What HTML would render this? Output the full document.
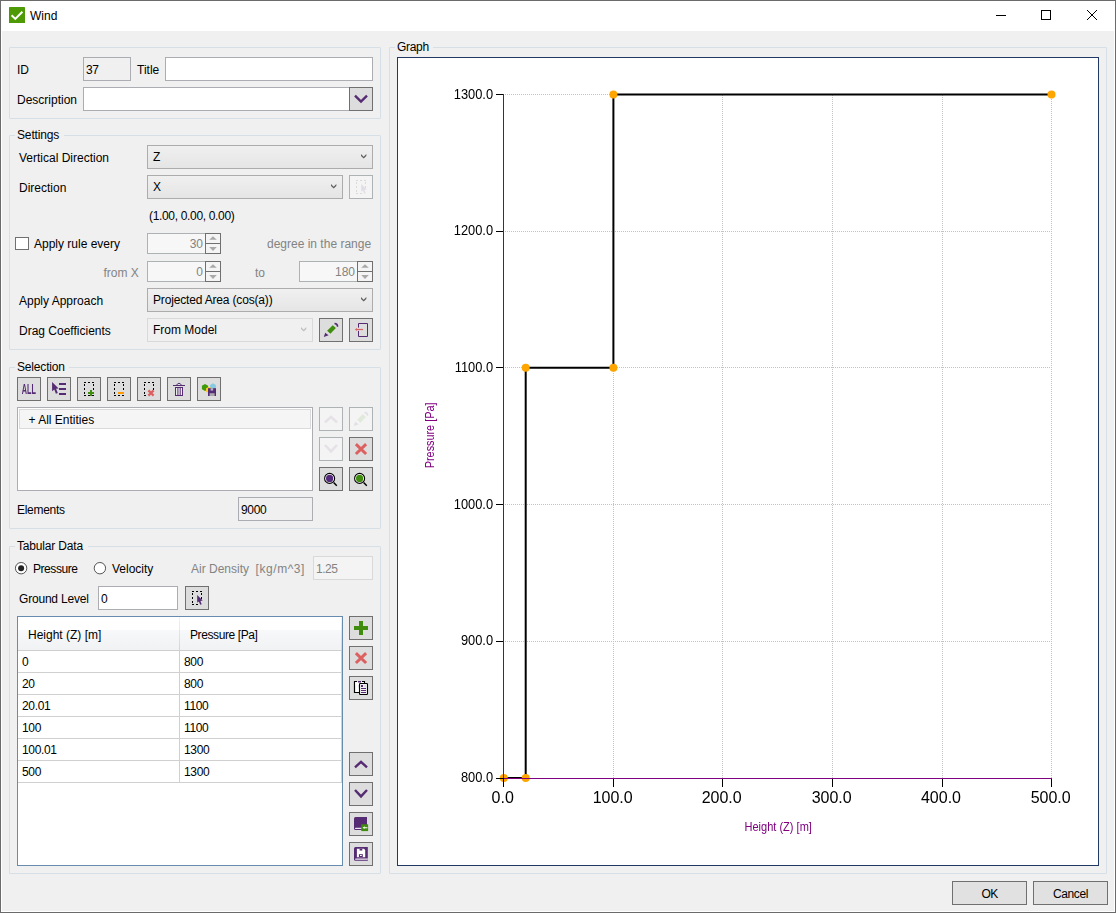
<!DOCTYPE html>
<html><head><meta charset="utf-8"><title>Wind</title>
<style>
*{box-sizing:border-box;margin:0;padding:0}
html,body{width:1116px;height:913px;overflow:hidden;background:#f0f0f0}
body{font-family:"Liberation Sans",sans-serif;font-size:12px;color:#000;position:relative;line-height:16px}
.abs,.t,.gb,.tb,.btn,.cb,.sp{position:absolute}
#frame{position:absolute;left:0;top:0;width:1116px;height:913px;border:1px solid #6b6b6b;box-shadow:inset 0 0 0 1px #fff;pointer-events:none}
#titlebar{position:absolute;left:1px;top:1px;width:1114px;height:30px;background:#fff}
.t{white-space:nowrap;height:16px;line-height:16px}
.g{color:#838383}
.gb{border:1px solid #d5dfe5;border-radius:1px}
.gbt{position:absolute;background:#f0f0f0;height:16px;line-height:16px;white-space:nowrap}
.tb{background:#fff;border:1px solid #abadb3;height:24px;line-height:22px;padding-left:2px;padding-top:1px;white-space:nowrap}
.tb.ro{background:#f0f0f0}
.tb.dis{background:#f4f4f4;border-color:#d9d9d9;color:#838383}
.btn{width:24px;height:24px;background:#ddd;border:1px solid #707070}
.btn.dis{background:#f4f4f4;border-color:#adb2b5}
.btn svg{position:absolute;left:-1px;top:-1px;width:24px;height:24px}
.cb{height:24px;border:1px solid #acacac;background:linear-gradient(#f0f0f0,#e5e5e5);line-height:22px;padding-left:5px;white-space:nowrap}
.cb.dis{background:#f0f0f0;border-color:#d9d9d9}
.cb svg{position:absolute;right:5px;top:8px;width:6px;height:5px;overflow:visible}
.bb{width:75px;height:24px;background:#e1e1e1;border:1px solid #707070;text-align:center;line-height:22px;padding-top:1px}
.sp{width:74px;height:21px;background:#f7f7f7;border:1px solid #adb2b5;color:#838383}
.sp span{position:absolute;right:17px;top:2px;line-height:16px}
.sp i{position:absolute;left:57px;width:16px;height:11px;border:1px solid #707070;background:#f4f4f4}
.sp i.u{top:-1px}.sp i.d{top:9px}
.sp svg{position:absolute;left:57px;top:-1px;width:16px;height:21px}
.n{letter-spacing:-0.35px}
</style></head><body>
<div id="titlebar"></div>
<svg class="abs" style="left:9px;top:7px" width="16" height="16" viewBox="0 0 16 16"><rect width="16" height="16" rx="0.6" fill="#4e9a06"/><path d="M2.6 8.2 L6.3 11.9 L13.4 4.8" fill="none" stroke="#fff" stroke-width="2"/></svg>
<div class="t" style="left:30px;top:8px">Wind</div>
<svg class="abs" style="left:990px;top:5px" width="116" height="20" viewBox="0 0 116 20"><g fill="none" stroke="#000" stroke-width="1"><path d="M6 10.5H16"/><rect x="51.5" y="5.5" width="9" height="9"/><path d="M97 5L107 15M107 5L97 15"/></g></svg>


<!-- group 1 -->
<div class="gb" style="left:9px;top:47px;width:372px;height:72px"></div>
<div class="t" style="left:17px;top:62px">ID</div>
<div class="tb ro" style="left:83px;top:57px;width:48px;letter-spacing:-0.4px">37</div>
<div class="t" style="left:137px;top:62px">Title</div>
<div class="tb" style="left:165px;top:57px;width:208px"></div>
<div class="t" style="left:17px;top:92px">Description</div>
<div class="tb" style="left:83px;top:87px;width:267px"></div>
<div class="btn" style="left:349px;top:87px"><svg viewBox="0 0 24 24"><path fill="none" stroke="#552b73" stroke-width="2.4" d="M6 8.6L12 14.6L18 8.6"/></svg></div>

<!-- settings -->
<div class="gb" style="left:9px;top:135px;width:372px;height:215px"></div>
<div class="gbt" style="left:15px;top:127px;width:49px;padding-left:2px;letter-spacing:-0.15px">Settings</div>
<div class="t" style="left:19px;top:150px">Vertical Direction</div>
<div class="cb" style="left:147px;top:145px;width:226px">Z<svg viewBox="0 0 6 5"><path d="M0 1.9L2.667 4.57L5.333 1.9L5.333 0.12L2.667 2.79L0 0.12Z" fill="#606060"/></svg></div>
<div class="t" style="left:19px;top:180px">Direction</div>
<div class="cb" style="left:147px;top:175px;width:196px">X<svg viewBox="0 0 6 5"><path d="M0 1.9L2.667 4.57L5.333 1.9L5.333 0.12L2.667 2.79L0 0.12Z" fill="#606060"/></svg></div>
<div class="btn dis" style="left:349px;top:175px"><svg viewBox="0 0 24 24" opacity="0.1"><path shape-rendering="crispEdges" fill="#000" d="M7 5h2v1h-2zM11 5h2v1h-2zM15 5h2v1h-2zM7 7h1v2h-1zM7 11h1v2h-1zM7 15h1v2h-1zM16 7h1v2h-1zM16 11h1v2h-1zM7 18h2v1h-2zM11 18h2v1h-2z"/><path fill="#552b73" d="M12.2 9V16.7L13.8 15.4L15.3 18.8L16.7 18.2L15.4 14.9L17.7 14.6Z"/></svg></div>
<div class="t" style="left:149px;top:208px;letter-spacing:-0.33px">(1.00, 0.00, 0.00)</div>
<div class="abs" style="left:15px;top:237px;width:14px;height:13px;border:1px solid #707070;background:#fff"></div>
<div class="t" style="left:34px;top:236px">Apply rule every</div>
<div class="sp" style="left:147px;top:233px"><span>30</span><i class="u"></i><i class="d"></i><svg viewBox="0 0 16 21"><path d="M4.2 6.8L8 3.2L11.8 6.8Z M4.2 14L8 18L11.8 14Z" fill="#a9a9a9"/></svg></div>
<div class="t g" style="left:267px;top:236px">degree in the range</div>
<div class="t g" style="left:103.5px;top:265px">from X</div>
<div class="sp" style="left:147px;top:261px"><span>0</span><i class="u"></i><i class="d"></i><svg viewBox="0 0 16 21"><path d="M4.2 6.8L8 3.2L11.8 6.8Z M4.2 14L8 18L11.8 14Z" fill="#a9a9a9"/></svg></div>
<div class="t g" style="left:255px;top:265px">to</div>
<div class="sp" style="left:299px;top:261px"><span>180</span><i class="u"></i><i class="d"></i><svg viewBox="0 0 16 21"><path d="M4.2 6.8L8 3.2L11.8 6.8Z M4.2 14L8 18L11.8 14Z" fill="#a9a9a9"/></svg></div>
<div class="t" style="left:19px;top:293px">Apply Approach</div>
<div class="cb" style="left:147px;top:288px;width:226px;letter-spacing:-0.17px">Projected Area (cos(a))<svg viewBox="0 0 6 5"><path d="M0 1.9L2.667 4.57L5.333 1.9L5.333 0.12L2.667 2.79L0 0.12Z" fill="#606060"/></svg></div>
<div class="t" style="left:19px;top:323px">Drag Coefficients</div>
<div class="cb dis" style="left:147px;top:318px;width:166px">From Model<svg viewBox="0 0 6 5"><path d="M0 1.9L2.667 4.57L5.333 1.9L5.333 0.12L2.667 2.79L0 0.12Z" fill="#bfbfbf"/></svg></div>
<div class="btn" style="left:319px;top:318px"><svg viewBox="0 0 24 24"><path fill="#552b73" d="M4.8 18.9L6.2 14.8L9.6 17.3Z"/><path fill="#3f8c0f" d="M8.1 12.8L13.7 7.3L16.9 10L11.4 15.8Z"/><path fill="none" stroke="#552b73" stroke-width="1.5" d="M15.5 5.6Q18.6 5.8 18.6 8.8"/></svg></div>
<div class="btn" style="left:349px;top:318px"><svg viewBox="0 0 24 24"><path fill="none" stroke="#552b73" stroke-width="1" d="M9.5 9.6V5.5H18.5V18.5H9.5V12.9"/><path fill="none" stroke="#dd6060" stroke-width="1.2" d="M7 11.5H14"/><path fill="#dd6060" d="M5.9 11.5L8 10.1V12.9Z"/></svg></div>

<!-- selection -->
<div class="gb" style="left:9px;top:367px;width:372px;height:162px"></div>
<div class="gbt" style="left:15px;top:359px;width:54px;padding-left:2px;letter-spacing:-0.17px">Selection</div>
<div class="btn" style="left:17px;top:377px"><svg viewBox="0 0 24 24" style="will-change:transform"><text transform="translate(4.8 16.9) scale(0.52 1)" font-family="Liberation Sans, sans-serif" font-size="14" font-weight="bold" fill="#552b73">ALL</text></svg></div>
<div class="btn" style="left:47px;top:377px"><svg viewBox="0 0 24 24"><path fill="#552b73" d="M5.1 5V14.2L7.3 12.4L8.9 16.7L10.8 15.9L9.1 11.8L11.6 11.5Z"/><path shape-rendering="crispEdges" fill="#552b73" d="M12 6h7v2h-7zM12 11h7v2h-7zM12 16h7v2h-7z"/></svg></div>
<div class="btn" style="left:77px;top:377px"><svg viewBox="0 0 24 24"><path shape-rendering="crispEdges" fill="#000" d="M7 5h2v1h-2zM11 5h2v1h-2zM15 5h2v1h-2zM7 7h1v2h-1zM7 11h1v2h-1zM7 15h1v2h-1zM16 7h1v2h-1zM16 11h1v2h-1zM16 15h1v2h-1zM7 18h2v1h-2zM11 18h2v1h-2zM15 18h2v1h-2z"/><path shape-rendering="crispEdges" fill="#3f8c0f" d="M11 15h6v2h-6zM13 13h2v6h-2z"/></svg></div>
<div class="btn" style="left:107px;top:377px"><svg viewBox="0 0 24 24"><path shape-rendering="crispEdges" fill="#000" d="M7 5h2v1h-2zM11 5h2v1h-2zM15 5h2v1h-2zM7 7h1v2h-1zM7 11h1v2h-1zM7 15h1v2h-1zM16 7h1v2h-1zM16 11h1v2h-1zM16 15h1v2h-1zM7 18h2v1h-2zM11 18h2v1h-2zM15 18h2v1h-2z"/><path shape-rendering="crispEdges" fill="#ff9900" d="M11 15h6v2h-6z"/></svg></div>
<div class="btn" style="left:137px;top:377px"><svg viewBox="0 0 24 24"><path shape-rendering="crispEdges" fill="#000" d="M7 5h2v1h-2zM11 5h2v1h-2zM15 5h2v1h-2zM7 7h1v2h-1zM7 11h1v2h-1zM7 15h1v2h-1zM16 7h1v2h-1zM16 11h1v2h-1zM7 18h2v1h-2z"/><path fill="none" stroke="#dd6060" stroke-width="2.2" d="M11.4 13.4L16.6 18.6M16.6 13.4L11.4 18.6"/></svg></div>
<div class="btn" style="left:167px;top:377px"><svg viewBox="0 0 24 24"><g fill="none" stroke="#552b73" stroke-width="1"><path d="M6 8.5H18"/><path d="M9.4 8.3Q12 4.2 14.6 8.3"/><rect x="8.5" y="10.5" width="7" height="8" fill="#ececec"/><path d="M10.9 10.5V18.5M13.2 10.5V18.5"/></g></svg></div>
<div class="btn" style="left:197px;top:377px"><svg viewBox="0 0 24 24"><polygon points="8.0,6.9 11.1,8.7 11.1,12.3 8.0,14.1 4.9,12.3 4.9,8.7" fill="#3f9a0a"/><polygon points="16.0,6.3 18.9,8.0 18.9,11.4 16.0,13.1 13.1,11.4 13.1,8.0" fill="#86cbe2"/><polygon points="11.9,9.7 14.8,11.3 14.8,14.6 11.9,16.3 9.0,14.7 9.0,11.3" fill="#ffc928"/><rect x="11" y="11.2" width="8" height="7.8" fill="#552b73"/><rect x="13.6" y="11.2" width="2.6" height="2.4" fill="#b9b4c6"/><rect x="12.6" y="16.2" width="5" height="2.8" fill="#a9a9ad"/></svg></div>
<div class="abs" style="left:17px;top:407px;width:296px;height:84px;background:#fff;border:1px solid #abadb3"></div>
<div class="abs" style="left:19px;top:409px;width:292px;height:20px;background:#f5f5f5;border:1px solid #dadada"></div>
<div class="t" style="left:28.5px;top:412px">+ All Entities</div>
<div class="btn dis" style="left:319px;top:407px"><svg viewBox="0 0 24 24" opacity="0.09"><path fill="none" stroke="#552b73" stroke-width="2.4" d="M6 15.4L12 9.8L18 15.4"/></svg></div>
<div class="btn dis" style="left:349px;top:407px"><svg viewBox="0 0 24 24" opacity="0.1"><path fill="#552b73" d="M4.8 18.9L6.2 14.8L9.6 17.3Z"/><path fill="#3f8c0f" d="M8.1 12.8L13.7 7.3L16.9 10L11.4 15.8Z"/><path fill="none" stroke="#552b73" stroke-width="1.5" d="M15.5 5.6Q18.6 5.8 18.6 8.8"/></svg></div>
<div class="btn dis" style="left:319px;top:437px"><svg viewBox="0 0 24 24" opacity="0.09"><path fill="none" stroke="#552b73" stroke-width="2.4" d="M6 8L12 14.4L18 8"/></svg></div>
<div class="btn" style="left:349px;top:437px"><svg viewBox="0 0 24 24"><path fill="none" stroke="#dd6060" stroke-width="3" d="M6.9 7.2L17.1 17M17.1 7.2L6.9 17"/></svg></div>
<div class="btn" style="left:319px;top:467px"><svg viewBox="0 0 24 24"><circle cx="10.6" cy="11.4" r="5" fill="#fff" stroke="#000" stroke-width="1.1"/><circle cx="10.6" cy="11.4" r="3.6" fill="#55297c"/><path d="M14.6 15.5L17.8 18.7" stroke="#000" stroke-width="1.5" fill="none"/></svg></div>
<div class="btn" style="left:349px;top:467px"><svg viewBox="0 0 24 24"><circle cx="10.6" cy="11.4" r="5" fill="#fff" stroke="#000" stroke-width="1.1"/><circle cx="10.6" cy="11.4" r="3.6" fill="#3f8c0f"/><path d="M14.6 15.5L17.8 18.7" stroke="#000" stroke-width="1.5" fill="none"/></svg></div>
<div class="t" style="left:17px;top:502px;letter-spacing:-0.3px">Elements</div>
<div class="tb ro" style="left:238px;top:497px;width:75px;height:24px;line-height:22px;letter-spacing:-0.35px">9000</div>

<!-- tabular -->
<div class="gb" style="left:9px;top:546px;width:372px;height:328px"></div>
<div class="gbt" style="left:15px;top:538px;width:73px;padding-left:2px;letter-spacing:-0.18px">Tabular Data</div>
<svg class="abs" style="left:0;top:550px" width="130" height="36" viewBox="0 550 130 36"><circle cx="21.1" cy="568.2" r="5.7" fill="#fff" stroke="#555" stroke-width="1"/><circle cx="21.1" cy="568.2" r="3" fill="#212121"/><circle cx="99.9" cy="568.2" r="5.7" fill="#fff" stroke="#555" stroke-width="1"/></svg>
<div class="t" style="left:33px;top:561px;letter-spacing:-0.44px">Pressure</div>
<div class="t" style="left:112px;top:561px">Velocity</div>
<div class="t g" style="left:191px;top:561px">Air Density</div><div class="t g" style="left:255.6px;top:561px;letter-spacing:0.55px">[kg/m^3]</div>
<div class="tb dis" style="left:313px;top:556px;width:60px;letter-spacing:-0.5px">1.25</div>
<div class="t" style="left:19px;top:591px;letter-spacing:-0.2px">Ground Level</div>
<div class="tb" style="left:98px;top:586px;width:80px;height:24px;line-height:22px">0</div>
<div class="btn" style="left:185px;top:586px"><svg viewBox="0 0 24 24"><path shape-rendering="crispEdges" fill="#000" d="M7 5h2v1h-2zM11 5h2v1h-2zM15 5h2v1h-2zM7 7h1v2h-1zM7 11h1v2h-1zM7 15h1v2h-1zM16 7h1v2h-1zM16 11h1v2h-1zM7 18h2v1h-2zM11 18h2v1h-2z"/><path fill="#552b73" d="M12.2 9V16.7L13.8 15.4L15.3 18.8L16.7 18.2L15.4 14.9L17.7 14.6Z"/></svg></div>
<div class="abs" id="grid" style="left:17px;top:616px;width:326px;height:250px;background:#fff;border:1px solid #688caf">
<div class="abs" style="left:0;top:0;width:324px;height:33px;background:linear-gradient(#fff 0,#fff 40.9%,#f7f8fa 40.9%,#f1f2f4 100%)"></div>
<div class="abs" style="left:161px;top:0;width:1px;height:33px;background:linear-gradient(#f2f2f2,#d5d5d5)"></div>
<div class="abs" style="left:323px;top:0;width:1px;height:33px;background:linear-gradient(#f2f2f2,#d5d5d5)"></div>
<div class="t" style="left:10px;top:10px">Height (Z) [m]</div>
<div class="t" style="left:172px;top:10px;letter-spacing:-0.4px">Pressure [Pa]</div>
<div class="abs" style="left:0;top:33px;width:324px;height:1px;background:#cfcfcf"></div>
<div class="t n" style="left:4px;top:37px">0</div><div class="t n" style="left:166px;top:37px">800</div>
<div class="abs" style="left:0;top:55px;width:324px;height:1px;background:#d0d0d0"></div>
<div class="t n" style="left:4px;top:59px">20</div><div class="t n" style="left:166px;top:59px">800</div>
<div class="abs" style="left:0;top:77px;width:324px;height:1px;background:#d0d0d0"></div>
<div class="t n" style="left:4px;top:81px">20.01</div><div class="t n" style="left:166px;top:81px">1100</div>
<div class="abs" style="left:0;top:99px;width:324px;height:1px;background:#d0d0d0"></div>
<div class="t n" style="left:4px;top:103px">100</div><div class="t n" style="left:166px;top:103px">1100</div>
<div class="abs" style="left:0;top:121px;width:324px;height:1px;background:#d0d0d0"></div>
<div class="t n" style="left:4px;top:125px">100.01</div><div class="t n" style="left:166px;top:125px">1300</div>
<div class="abs" style="left:0;top:143px;width:324px;height:1px;background:#d0d0d0"></div>
<div class="t n" style="left:4px;top:147px">500</div><div class="t n" style="left:166px;top:147px">1300</div>
<div class="abs" style="left:0;top:165px;width:324px;height:1px;background:#d0d0d0"></div>
<div class="abs" style="left:161px;top:34px;width:1px;height:132px;background:#d0d0d0"></div>
<div class="abs" style="left:323px;top:34px;width:1px;height:132px;background:#d0d0d0"></div>
</div>
<div class="btn" style="left:349px;top:616px"><svg viewBox="0 0 24 24"><path shape-rendering="crispEdges" fill="#3f8c0f" d="M5 10h14v4h-14zM10 5h4v14h-4z"/></svg></div>
<div class="btn" style="left:349px;top:646px"><svg viewBox="0 0 24 24"><path fill="none" stroke="#dd6060" stroke-width="3" d="M6.9 7.2L17.1 17M17.1 7.2L6.9 17"/></svg></div>
<div class="btn" style="left:349px;top:676px"><svg viewBox="0 0 24 24"><path fill="#fff" stroke="#000" stroke-width="1.1" d="M8 5.5H5.5V16.5H11"/><path fill="#fff" d="M6 6h9.5v3h-9.5z"/><path fill="none" stroke="#000" stroke-width="1.1" d="M8 5.5H5.5V16.5H10M13 5.5H15.5V7.5"/><rect x="9" y="5" width="3" height="1.5" fill="#552b73"/><rect x="10.5" y="7.5" width="8" height="11" rx="0.8" fill="#f1f1f1" stroke="#000" stroke-width="1.1"/><path shape-rendering="crispEdges" fill="#552b73" d="M12 9h2v2h-2zM12 12h5v1h-5zM12 14h5v1h-5zM12 16h5v1h-5z"/><rect x="15" y="9" width="2" height="2" fill="#ddd"/></svg></div>
<div class="btn" style="left:349px;top:752px"><svg viewBox="0 0 24 24"><path fill="none" stroke="#552b73" stroke-width="2.4" d="M6 15.4L12 9.8L18 15.4"/></svg></div>
<div class="btn" style="left:349px;top:782px"><svg viewBox="0 0 24 24"><path fill="none" stroke="#552b73" stroke-width="2.4" d="M6 8L12 14.4L18 8"/></svg></div>
<div class="btn" style="left:349px;top:812px"><svg viewBox="0 0 24 24"><path fill="#552b73" d="M6.5 5H18V18H6.5Q5 18 5 16.5V6.5Q5 5 6.5 5Z"/><path fill="#e9e4ef" d="M6.6 15.7H18V17H6.6Q5.9 17 5.9 16.35Q5.9 15.7 6.6 15.7Z"/><rect x="12.3" y="12.3" width="6.8" height="6.8" fill="#3f8c0f"/><path fill="#fff" d="M13.6 15.7L15.6 14.3V15.2H18.4V16.2H15.6V17.1Z"/></svg></div>
<div class="btn" style="left:349px;top:842px"><svg viewBox="0 0 24 24"><path fill="#552b73" d="M6.5 5H18.8V18.8H6.5Q5 18.8 5 17.3V6.5Q5 5 6.5 5Z"/><path fill="#efeaf4" d="M6.8 16.6H18.8V17.7H6.8Q6.1 17.7 6.1 17.15Q6.1 16.6 6.8 16.6Z"/><path fill="#fff" d="M7.9 6.8H15L16.2 8V15.2H7.9Z"/><rect x="10.6" y="6.8" width="2.7" height="1.7" fill="#552b73"/><rect x="9.9" y="12.2" width="3.9" height="3" fill="#552b73"/><rect x="11" y="13" width="1.8" height="1" fill="#fff"/></svg></div>

<div class="gb" style="left:389px;top:47px;width:718px;height:827px"></div>
<div class="gbt" style="left:395px;top:39px;width:38px;padding-left:2px;letter-spacing:-0.3px">Graph</div>
<div class="abs" style="left:397px;top:57px;width:702px;height:809px;background:#fff;border:1px solid #1f3864"></div>
<svg class="abs" style="left:0;top:0" width="1116" height="913" viewBox="0 0 1116 913" font-family="Liberation Sans, sans-serif">
<g stroke="#c3c3c3" stroke-width="1" stroke-dasharray="1 1" shape-rendering="crispEdges">
<path d="M613.5 95V778"/>
<path d="M722.5 95V778"/>
<path d="M832.5 95V778"/>
<path d="M942.5 95V778"/>
<path d="M1051.5 95V778"/>
<path d="M505 641.5H1051"/>
<path d="M505 504.5H1051"/>
<path d="M505 367.5H1051"/>
<path d="M505 231.5H1051"/>
<path d="M505 94.5H1051"/>
</g>
<path d="M503.8 778.0 L525.7 778.0 L525.7 367.8 L613.4 367.8 L613.4 94.4 L1051.5 94.4" fill="none" stroke="#000" stroke-width="2" stroke-linejoin="miter"/>
<circle cx="503.8" cy="778.0" r="4" fill="#ffa500"/>
<circle cx="525.7" cy="778.0" r="4" fill="#ffa500"/>
<circle cx="525.7" cy="367.8" r="4" fill="#ffa500"/>
<circle cx="613.4" cy="367.8" r="4" fill="#ffa500"/>
<circle cx="613.4" cy="94.4" r="4" fill="#ffa500"/>
<circle cx="1051.5" cy="94.4" r="4" fill="#ffa500"/>
<g stroke="#000" stroke-width="1" shape-rendering="crispEdges">
<path d="M503.5 778V787"/>
<path d="M613.5 778V787"/>
<path d="M722.5 778V787"/>
<path d="M832.5 778V787"/>
<path d="M942.5 778V787"/>
<path d="M1051.5 778V787"/>
<path d="M496 778.5H504"/>
<path d="M496 641.5H504"/>
<path d="M496 504.5H504"/>
<path d="M496 367.5H504"/>
<path d="M496 231.5H504"/>
<path d="M496 94.5H504"/>
</g>
<g stroke="#800080" stroke-width="1" shape-rendering="crispEdges"><path d="M503.5 94V779"/><path d="M503 778.5H1052"/></g>
<g stroke="#000" stroke-width="1" shape-rendering="crispEdges"><path d="M503.5 778V787"/><path d="M496 778.5H504"/></g>
<g font-size="14" text-anchor="end" fill="#000">
<text transform="translate(493.1 781.9) scale(0.92 1)">800.0</text>
<text transform="translate(493.1 645.2) scale(0.92 1)">900.0</text>
<text transform="translate(493.1 508.9) scale(0.92 1)">1000.0</text>
<text transform="translate(493.1 371.9) scale(0.92 1)">1100.0</text>
<text transform="translate(493.1 234.9) scale(0.92 1)">1200.0</text>
<text transform="translate(493.1 98.9) scale(0.92 1)">1300.0</text>
</g>
<g font-size="16" text-anchor="middle" fill="#000">
<text x="502.7" y="803.1">0.0</text>
<text x="612.7" y="803.1">100.0</text>
<text x="721.7" y="803.1">200.0</text>
<text x="831.7" y="803.1">300.0</text>
<text x="941" y="803.1">400.0</text>
<text x="1050.7" y="803.1">500.0</text>
</g>
<text transform="translate(778.2 830.5) scale(0.905 1)" font-size="12.2" text-anchor="middle" fill="#800080">Height (Z) [m]</text>
<text transform="translate(434.3 435.4) rotate(-90) scale(0.89 1)" font-size="12.2" text-anchor="middle" fill="#800080">Pressure [Pa]</text>
</svg>
<div class="abs bb" style="left:952px;top:881px;letter-spacing:-0.7px">OK</div>
<div class="abs bb" style="left:1033px;top:881px;letter-spacing:-0.4px">Cancel</div>
<div id="frame"></div>
</body></html>
